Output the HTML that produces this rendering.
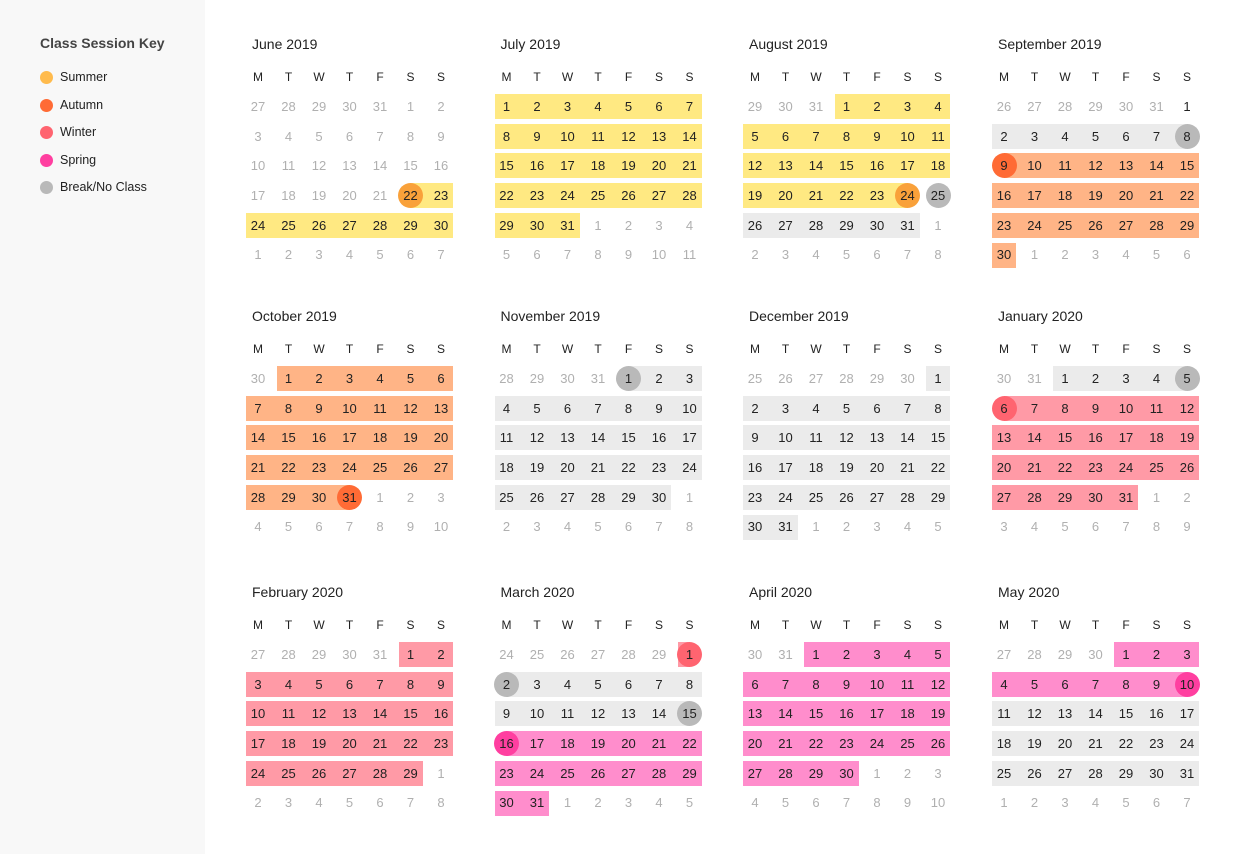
<!DOCTYPE html>
<html><head><meta charset="utf-8"><style>
*{margin:0;padding:0;box-sizing:border-box}
body{width:1240px;height:854px;background:#fff;font-family:"Liberation Sans",Arial,sans-serif;position:relative;overflow:hidden;color:#222}
.side{position:absolute;left:0;top:0;width:205px;height:854px;background:#f8f8f8}
.side h3{position:absolute;left:40px;top:35px;font-size:14px;font-weight:bold;color:#444}
.k{position:absolute;left:40px;font-size:12.5px;color:#222;height:14px;line-height:14px}
.k i{position:absolute;left:0;top:1px;width:13px;height:13px;border-radius:50%}
.k span{position:absolute;left:20px;top:0;white-space:nowrap}
.m{position:absolute;width:207px;height:175px}
.t{position:absolute;left:6px;top:-60px;font-size:14px;line-height:20px;white-space:nowrap}
.h,.g{position:absolute;left:0;display:grid;grid-template-columns:repeat(7,24px);column-gap:6.5px;text-align:center}
.h{top:-25px;font-size:12px;line-height:16px}
.g{top:0;row-gap:4.7px;grid-auto-rows:25px;font-size:13px;line-height:25px;z-index:2}
.o{color:#b0b0b0}
.b{position:absolute;height:25px;z-index:0}
.c{position:absolute;width:25px;height:25px;border-radius:50%;z-index:1}
.Y{background:#ffe982}.A{background:#ffb486}.W{background:#ff9aa6}.S{background:#ff8dcc}.G{background:#ebebeb}
.cY{background:#f9a13a}.cA{background:#ff6b35}.cW{background:#ff6470}.cS{background:#ff3fa0}.cG{background:#b9b9b9}
</style></head><body>
<div class="side">
<h3>Class Session Key</h3>
<div class="k" style="top:70px"><i style="background:#ffbb4d"></i><span>Summer</span></div>
<div class="k" style="top:98px"><i style="background:#ff6b35"></i><span>Autumn</span></div>
<div class="k" style="top:125px"><i style="background:#ff6470"></i><span>Winter</span></div>
<div class="k" style="top:153px"><i style="background:#ff3fa0"></i><span>Spring</span></div>
<div class="k" style="top:180px"><i style="background:#b9b9b9"></i><span>Break/No Class</span></div>
</div>

<!-- June -->
<div class="m" style="left:246px;top:94px">
<div class="t">June 2019</div>
<div class="h"><span>M</span><span>T</span><span>W</span><span>T</span><span>F</span><span>S</span><span>S</span></div>
<i class="b Y" style="left:164.5px;top:89.1px;width:42.5px"></i>
<i class="b Y" style="left:0;top:118.8px;width:207px"></i>
<i class="c cY" style="left:152px;top:89.1px"></i>
<div class="g">
<span class="o">27</span><span class="o">28</span><span class="o">29</span><span class="o">30</span><span class="o">31</span><span class="o">1</span><span class="o">2</span>
<span class="o">3</span><span class="o">4</span><span class="o">5</span><span class="o">6</span><span class="o">7</span><span class="o">8</span><span class="o">9</span>
<span class="o">10</span><span class="o">11</span><span class="o">12</span><span class="o">13</span><span class="o">14</span><span class="o">15</span><span class="o">16</span>
<span class="o">17</span><span class="o">18</span><span class="o">19</span><span class="o">20</span><span class="o">21</span><span>22</span><span>23</span>
<span>24</span><span>25</span><span>26</span><span>27</span><span>28</span><span>29</span><span>30</span>
<span class="o">1</span><span class="o">2</span><span class="o">3</span><span class="o">4</span><span class="o">5</span><span class="o">6</span><span class="o">7</span>
</div></div>

<!-- July -->
<div class="m" style="left:494.5px;top:94px">
<div class="t">July 2019</div>
<div class="h"><span>M</span><span>T</span><span>W</span><span>T</span><span>F</span><span>S</span><span>S</span></div>
<i class="b Y" style="left:0;top:0;width:207px"></i>
<i class="b Y" style="left:0;top:29.7px;width:207px"></i>
<i class="b Y" style="left:0;top:59.4px;width:207px"></i>
<i class="b Y" style="left:0;top:89.1px;width:207px"></i>
<i class="b Y" style="left:0;top:118.8px;width:85px"></i>
<div class="g">
<span>1</span><span>2</span><span>3</span><span>4</span><span>5</span><span>6</span><span>7</span>
<span>8</span><span>9</span><span>10</span><span>11</span><span>12</span><span>13</span><span>14</span>
<span>15</span><span>16</span><span>17</span><span>18</span><span>19</span><span>20</span><span>21</span>
<span>22</span><span>23</span><span>24</span><span>25</span><span>26</span><span>27</span><span>28</span>
<span>29</span><span>30</span><span>31</span><span class="o">1</span><span class="o">2</span><span class="o">3</span><span class="o">4</span>
<span class="o">5</span><span class="o">6</span><span class="o">7</span><span class="o">8</span><span class="o">9</span><span class="o">10</span><span class="o">11</span>
</div></div>

<!-- August -->
<div class="m" style="left:743px;top:94px">
<div class="t">August 2019</div>
<div class="h"><span>M</span><span>T</span><span>W</span><span>T</span><span>F</span><span>S</span><span>S</span></div>
<i class="b Y" style="left:91.5px;top:0;width:115.5px"></i>
<i class="b Y" style="left:0;top:29.7px;width:207px"></i>
<i class="b Y" style="left:0;top:59.4px;width:207px"></i>
<i class="b Y" style="left:0;top:89.1px;width:164.5px"></i>
<i class="c cY" style="left:152px;top:89.1px"></i>
<i class="c cG" style="left:182.5px;top:89.1px"></i>
<i class="b G" style="left:0;top:118.8px;width:176.5px"></i>
<div class="g">
<span class="o">29</span><span class="o">30</span><span class="o">31</span><span>1</span><span>2</span><span>3</span><span>4</span>
<span>5</span><span>6</span><span>7</span><span>8</span><span>9</span><span>10</span><span>11</span>
<span>12</span><span>13</span><span>14</span><span>15</span><span>16</span><span>17</span><span>18</span>
<span>19</span><span>20</span><span>21</span><span>22</span><span>23</span><span>24</span><span>25</span>
<span>26</span><span>27</span><span>28</span><span>29</span><span>30</span><span>31</span><span class="o">1</span>
<span class="o">2</span><span class="o">3</span><span class="o">4</span><span class="o">5</span><span class="o">6</span><span class="o">7</span><span class="o">8</span>
</div></div>

<!-- September -->
<div class="m" style="left:992px;top:94px">
<div class="t">September 2019</div>
<div class="h"><span>M</span><span>T</span><span>W</span><span>T</span><span>F</span><span>S</span><span>S</span></div>
<i class="b G" style="left:0;top:29.7px;width:195px"></i>
<i class="c cG" style="left:182.5px;top:29.7px"></i>
<i class="b A" style="left:12px;top:59.4px;width:195px"></i>
<i class="c cA" style="left:-0.5px;top:59.4px"></i>
<i class="b A" style="left:0;top:89.1px;width:207px"></i>
<i class="b A" style="left:0;top:118.8px;width:207px"></i>
<i class="b A" style="left:0;top:148.5px;width:24px"></i>
<div class="g">
<span class="o">26</span><span class="o">27</span><span class="o">28</span><span class="o">29</span><span class="o">30</span><span class="o">31</span><span>1</span>
<span>2</span><span>3</span><span>4</span><span>5</span><span>6</span><span>7</span><span>8</span>
<span>9</span><span>10</span><span>11</span><span>12</span><span>13</span><span>14</span><span>15</span>
<span>16</span><span>17</span><span>18</span><span>19</span><span>20</span><span>21</span><span>22</span>
<span>23</span><span>24</span><span>25</span><span>26</span><span>27</span><span>28</span><span>29</span>
<span>30</span><span class="o">1</span><span class="o">2</span><span class="o">3</span><span class="o">4</span><span class="o">5</span><span class="o">6</span>
</div></div>

<!-- October -->
<div class="m" style="left:246px;top:366px">
<div class="t">October 2019</div>
<div class="h"><span>M</span><span>T</span><span>W</span><span>T</span><span>F</span><span>S</span><span>S</span></div>
<i class="b A" style="left:30.5px;top:0;width:176.5px"></i>
<i class="b A" style="left:0;top:29.7px;width:207px"></i>
<i class="b A" style="left:0;top:59.4px;width:207px"></i>
<i class="b A" style="left:0;top:89.1px;width:207px"></i>
<i class="b A" style="left:0;top:118.8px;width:103.5px"></i>
<i class="c cA" style="left:91px;top:118.8px"></i>
<div class="g">
<span class="o">30</span><span>1</span><span>2</span><span>3</span><span>4</span><span>5</span><span>6</span>
<span>7</span><span>8</span><span>9</span><span>10</span><span>11</span><span>12</span><span>13</span>
<span>14</span><span>15</span><span>16</span><span>17</span><span>18</span><span>19</span><span>20</span>
<span>21</span><span>22</span><span>23</span><span>24</span><span>25</span><span>26</span><span>27</span>
<span>28</span><span>29</span><span>30</span><span>31</span><span class="o">1</span><span class="o">2</span><span class="o">3</span>
<span class="o">4</span><span class="o">5</span><span class="o">6</span><span class="o">7</span><span class="o">8</span><span class="o">9</span><span class="o">10</span>
</div></div>

<!-- November -->
<div class="m" style="left:494.5px;top:366px">
<div class="t">November 2019</div>
<div class="h"><span>M</span><span>T</span><span>W</span><span>T</span><span>F</span><span>S</span><span>S</span></div>
<i class="b G" style="left:134px;top:0;width:73px"></i>
<i class="c cG" style="left:121.5px;top:0"></i>
<i class="b G" style="left:0;top:29.7px;width:207px"></i>
<i class="b G" style="left:0;top:59.4px;width:207px"></i>
<i class="b G" style="left:0;top:89.1px;width:207px"></i>
<i class="b G" style="left:0;top:118.8px;width:176.5px"></i>
<div class="g">
<span class="o">28</span><span class="o">29</span><span class="o">30</span><span class="o">31</span><span>1</span><span>2</span><span>3</span>
<span>4</span><span>5</span><span>6</span><span>7</span><span>8</span><span>9</span><span>10</span>
<span>11</span><span>12</span><span>13</span><span>14</span><span>15</span><span>16</span><span>17</span>
<span>18</span><span>19</span><span>20</span><span>21</span><span>22</span><span>23</span><span>24</span>
<span>25</span><span>26</span><span>27</span><span>28</span><span>29</span><span>30</span><span class="o">1</span>
<span class="o">2</span><span class="o">3</span><span class="o">4</span><span class="o">5</span><span class="o">6</span><span class="o">7</span><span class="o">8</span>
</div></div>

<!-- December -->
<div class="m" style="left:743px;top:366px">
<div class="t">December 2019</div>
<div class="h"><span>M</span><span>T</span><span>W</span><span>T</span><span>F</span><span>S</span><span>S</span></div>
<i class="b G" style="left:183px;top:0;width:24px"></i>
<i class="b G" style="left:0;top:29.7px;width:207px"></i>
<i class="b G" style="left:0;top:59.4px;width:207px"></i>
<i class="b G" style="left:0;top:89.1px;width:207px"></i>
<i class="b G" style="left:0;top:118.8px;width:207px"></i>
<i class="b G" style="left:0;top:148.5px;width:54.5px"></i>
<div class="g">
<span class="o">25</span><span class="o">26</span><span class="o">27</span><span class="o">28</span><span class="o">29</span><span class="o">30</span><span>1</span>
<span>2</span><span>3</span><span>4</span><span>5</span><span>6</span><span>7</span><span>8</span>
<span>9</span><span>10</span><span>11</span><span>12</span><span>13</span><span>14</span><span>15</span>
<span>16</span><span>17</span><span>18</span><span>19</span><span>20</span><span>21</span><span>22</span>
<span>23</span><span>24</span><span>25</span><span>26</span><span>27</span><span>28</span><span>29</span>
<span>30</span><span>31</span><span class="o">1</span><span class="o">2</span><span class="o">3</span><span class="o">4</span><span class="o">5</span>
</div></div>

<!-- January -->
<div class="m" style="left:992px;top:366px">
<div class="t">January 2020</div>
<div class="h"><span>M</span><span>T</span><span>W</span><span>T</span><span>F</span><span>S</span><span>S</span></div>
<i class="b G" style="left:61px;top:0;width:134px"></i>
<i class="c cG" style="left:182.5px;top:0"></i>
<i class="b W" style="left:12px;top:29.7px;width:195px"></i>
<i class="c cW" style="left:-0.5px;top:29.7px"></i>
<i class="b W" style="left:0;top:59.4px;width:207px"></i>
<i class="b W" style="left:0;top:89.1px;width:207px"></i>
<i class="b W" style="left:0;top:118.8px;width:146px"></i>
<div class="g">
<span class="o">30</span><span class="o">31</span><span>1</span><span>2</span><span>3</span><span>4</span><span>5</span>
<span>6</span><span>7</span><span>8</span><span>9</span><span>10</span><span>11</span><span>12</span>
<span>13</span><span>14</span><span>15</span><span>16</span><span>17</span><span>18</span><span>19</span>
<span>20</span><span>21</span><span>22</span><span>23</span><span>24</span><span>25</span><span>26</span>
<span>27</span><span>28</span><span>29</span><span>30</span><span>31</span><span class="o">1</span><span class="o">2</span>
<span class="o">3</span><span class="o">4</span><span class="o">5</span><span class="o">6</span><span class="o">7</span><span class="o">8</span><span class="o">9</span>
</div></div>

<!-- February -->
<div class="m" style="left:246px;top:642px">
<div class="t">February 2020</div>
<div class="h"><span>M</span><span>T</span><span>W</span><span>T</span><span>F</span><span>S</span><span>S</span></div>
<i class="b W" style="left:152.5px;top:0;width:54.5px"></i>
<i class="b W" style="left:0;top:29.7px;width:207px"></i>
<i class="b W" style="left:0;top:59.4px;width:207px"></i>
<i class="b W" style="left:0;top:89.1px;width:207px"></i>
<i class="b W" style="left:0;top:118.8px;width:176.5px"></i>
<div class="g">
<span class="o">27</span><span class="o">28</span><span class="o">29</span><span class="o">30</span><span class="o">31</span><span>1</span><span>2</span>
<span>3</span><span>4</span><span>5</span><span>6</span><span>7</span><span>8</span><span>9</span>
<span>10</span><span>11</span><span>12</span><span>13</span><span>14</span><span>15</span><span>16</span>
<span>17</span><span>18</span><span>19</span><span>20</span><span>21</span><span>22</span><span>23</span>
<span>24</span><span>25</span><span>26</span><span>27</span><span>28</span><span>29</span><span class="o">1</span>
<span class="o">2</span><span class="o">3</span><span class="o">4</span><span class="o">5</span><span class="o">6</span><span class="o">7</span><span class="o">8</span>
</div></div>

<!-- March -->
<div class="m" style="left:494.5px;top:642px">
<div class="t">March 2020</div>
<div class="h"><span>M</span><span>T</span><span>W</span><span>T</span><span>F</span><span>S</span><span>S</span></div>
<i class="b W" style="left:183px;top:0;width:12px"></i>
<i class="c cW" style="left:182.5px;top:0"></i>
<i class="b G" style="left:12px;top:29.7px;width:195px"></i>
<i class="c cG" style="left:-0.5px;top:29.7px"></i>
<i class="b G" style="left:0;top:59.4px;width:195px"></i>
<i class="c cG" style="left:182.5px;top:59.4px"></i>
<i class="b S" style="left:12px;top:89.1px;width:195px"></i>
<i class="c cS" style="left:-0.5px;top:89.1px"></i>
<i class="b S" style="left:0;top:118.8px;width:207px"></i>
<i class="b S" style="left:0;top:148.5px;width:54.5px"></i>
<div class="g">
<span class="o">24</span><span class="o">25</span><span class="o">26</span><span class="o">27</span><span class="o">28</span><span class="o">29</span><span>1</span>
<span>2</span><span>3</span><span>4</span><span>5</span><span>6</span><span>7</span><span>8</span>
<span>9</span><span>10</span><span>11</span><span>12</span><span>13</span><span>14</span><span>15</span>
<span>16</span><span>17</span><span>18</span><span>19</span><span>20</span><span>21</span><span>22</span>
<span>23</span><span>24</span><span>25</span><span>26</span><span>27</span><span>28</span><span>29</span>
<span>30</span><span>31</span><span class="o">1</span><span class="o">2</span><span class="o">3</span><span class="o">4</span><span class="o">5</span>
</div></div>

<!-- April -->
<div class="m" style="left:743px;top:642px">
<div class="t">April 2020</div>
<div class="h"><span>M</span><span>T</span><span>W</span><span>T</span><span>F</span><span>S</span><span>S</span></div>
<i class="b S" style="left:61px;top:0;width:146px"></i>
<i class="b S" style="left:0;top:29.7px;width:207px"></i>
<i class="b S" style="left:0;top:59.4px;width:207px"></i>
<i class="b S" style="left:0;top:89.1px;width:207px"></i>
<i class="b S" style="left:0;top:118.8px;width:115.5px"></i>
<div class="g">
<span class="o">30</span><span class="o">31</span><span>1</span><span>2</span><span>3</span><span>4</span><span>5</span>
<span>6</span><span>7</span><span>8</span><span>9</span><span>10</span><span>11</span><span>12</span>
<span>13</span><span>14</span><span>15</span><span>16</span><span>17</span><span>18</span><span>19</span>
<span>20</span><span>21</span><span>22</span><span>23</span><span>24</span><span>25</span><span>26</span>
<span>27</span><span>28</span><span>29</span><span>30</span><span class="o">1</span><span class="o">2</span><span class="o">3</span>
<span class="o">4</span><span class="o">5</span><span class="o">6</span><span class="o">7</span><span class="o">8</span><span class="o">9</span><span class="o">10</span>
</div></div>

<!-- May -->
<div class="m" style="left:992px;top:642px">
<div class="t">May 2020</div>
<div class="h"><span>M</span><span>T</span><span>W</span><span>T</span><span>F</span><span>S</span><span>S</span></div>
<i class="b S" style="left:122px;top:0;width:85px"></i>
<i class="b S" style="left:0;top:29.7px;width:195px"></i>
<i class="c cS" style="left:182.5px;top:29.7px"></i>
<i class="b G" style="left:0;top:59.4px;width:207px"></i>
<i class="b G" style="left:0;top:89.1px;width:207px"></i>
<i class="b G" style="left:0;top:118.8px;width:207px"></i>
<div class="g">
<span class="o">27</span><span class="o">28</span><span class="o">29</span><span class="o">30</span><span>1</span><span>2</span><span>3</span>
<span>4</span><span>5</span><span>6</span><span>7</span><span>8</span><span>9</span><span>10</span>
<span>11</span><span>12</span><span>13</span><span>14</span><span>15</span><span>16</span><span>17</span>
<span>18</span><span>19</span><span>20</span><span>21</span><span>22</span><span>23</span><span>24</span>
<span>25</span><span>26</span><span>27</span><span>28</span><span>29</span><span>30</span><span>31</span>
<span class="o">1</span><span class="o">2</span><span class="o">3</span><span class="o">4</span><span class="o">5</span><span class="o">6</span><span class="o">7</span>
</div></div>
</body></html>
